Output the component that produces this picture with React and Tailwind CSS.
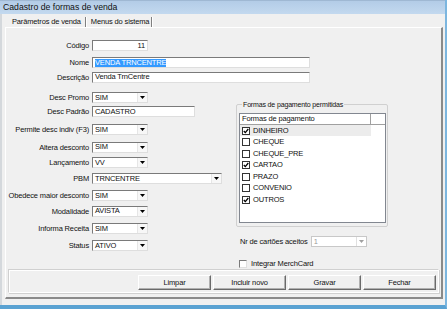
import React from "react"

const sunken = "bg-white border border-t-[#7a7a7a] border-l-[#7a7a7a] border-b-[#dedede] border-r-[#dedede]"

function Arrow({ disabled }) {
  return (
    <svg width="5" height="3" viewBox="0 0 5 3">
      <path d="M0 0h5L2.5 3z" fill={disabled ? "#a0a0a0" : "#000"} />
    </svg>
  )
}

function TextBox({ value, w, right, selected }) {
  return (
    <div className={`${sunken} h-[11px] flex items-center px-[2px] leading-none ${right ? "justify-end" : ""}`} style={{ width: w }}>
      {selected ? <span className="bg-[#3399ff] text-white">{value}</span> : value}
    </div>
  )
}

function Select({ value, w = 56, disabled }) {
  return (
    <div
      className={`h-[11px] flex items-center leading-none bg-white border ${
        disabled
          ? "border-[#c8c8c8] text-[#9a9a9a]"
          : "border-t-[#7a7a7a] border-l-[#7a7a7a] border-b-[#dedede] border-r-[#dedede]"
      }`}
      style={{ width: w }}
    >
      <span className="flex-1 pl-[2px]">{value}</span>
      <span
        className={`w-[10px] h-full flex items-center justify-center border-l ${
          disabled ? "border-[#e0e0e0]" : "border-[#e6e6e6] bg-[#f7f7f7]"
        }`}
      >
        <Arrow disabled={disabled} />
      </span>
    </div>
  )
}

function Row({ label, mt, children }) {
  return (
    <div className="flex items-center" style={{ marginTop: mt }}>
      <div className="w-[83px] text-right whitespace-nowrap">{label}</div>
      <div className="ml-[3px]">{children}</div>
    </div>
  )
}

function Check({ checked, dark = true }) {
  return (
    <span
      className={`w-[8px] h-[8px] flex items-center justify-center bg-white border ${
        dark ? "border-[#333]" : "border-t-[#7a7a7a] border-l-[#7a7a7a] border-b-[#e0e0e0] border-r-[#e0e0e0]"
      }`}
    >
      {checked && (
        <svg width="6" height="6" viewBox="0 0 6 6">
          <path d="M0.8 3l1.5 1.6L5.3 1" stroke="#000" strokeWidth="1.3" fill="none" />
        </svg>
      )}
    </span>
  )
}

const formas = [
  ["DINHEIRO", true],
  ["CHEQUE", false],
  ["CHEQUE_PRE", false],
  ["CARTAO", true],
  ["PRAZO", false],
  ["CONVENIO", false],
  ["OUTROS", true],
]

function Button({ children }) {
  return (
    <div className="w-[73px] h-[15px] flex items-center justify-center bg-[#f0f0f0] border border-t-white border-l-white border-b-[#6a6a6a] border-r-[#6a6a6a] shadow-[inset_-1px_-1px_0_#b0b0b0]">
      {children}
    </div>
  )
}

export default function App() {
  return (
    <div className="w-[447px] h-[309px] bg-[#f0f0f0] flex flex-col overflow-hidden font-['Liberation_Sans',Arial,sans-serif] text-[7.5px] tracking-[-0.15px] text-[#111] border-r-2 border-r-[#7cb6df] border-b-4 border-b-[#5aa2d2]">
      {/* Title bar */}
      <div className="h-[14px] shrink-0 flex items-center pl-[3px] bg-gradient-to-b from-[#b3cce7] to-[#c3d9ef] border-t border-[#9fb8d3] text-[8.7px] tracking-normal leading-none">
        Cadastro de formas de venda
      </div>

      <div className="flex-1 flex flex-col border-l-2 border-[#d4d8dc]">
        {/* Tabs */}
        <div className="h-[13px] shrink-0 flex items-end pl-[6px]">
          <div className="h-[10px] flex items-center pl-[4px] pr-[4px] border-r border-[#808080] shadow-[1px_0_0_#fff]">
            Parâmetros de venda
          </div>
          <div className="h-[10px] flex items-center pl-[5px] pr-[2px] border-r border-[#808080] shadow-[1px_0_0_#fff]">
            Menus do sistema
          </div>
        </div>

        {/* Tab panel */}
        <div className="ml-[3px] w-[438px] h-[272px] flex flex-col border-t border-l border-t-white border-l-white border-r-2 border-b-2 border-r-[#8a8a8a] border-b-[#8a8a8a]">
          <Row label="Código" mt={12}>
            <TextBox value="11" w={56} right />
          </Row>
          <Row label="Nome" mt={6}>
            <TextBox value="VENDA TRNCENTRE" w={218} selected />
          </Row>
          <Row label="Descrição" mt={3}>
            <TextBox value="Venda TrnCentre" w={218} />
          </Row>

          <div className="flex mt-[9px]">
            <div className="w-[230px]">
              <Row label="Desc Promo" mt={0}>
                <Select value="SIM" />
              </Row>
              <Row label="Desc Padrão" mt={3}>
                <TextBox value="CADASTRO" w={103} />
              </Row>
              <Row label="Permite desc indiv (F3)" mt={7}>
                <Select value="SIM" />
              </Row>
              <Row label="Altera desconto" mt={6}>
                <Select value="SIM" />
              </Row>
              <Row label="Lançamento" mt={4}>
                <Select value="VV" />
              </Row>
              <Row label="PBM" mt={5}>
                <Select value="TRNCENTRE" w={130} />
              </Row>
              <Row label="Obedece maior desconto" mt={6}>
                <Select value="SIM" />
              </Row>
              <Row label="Modalidade" mt={4}>
                <Select value="AVISTA" />
              </Row>
              <Row label="Informa Receita" mt={6}>
                <Select value="SIM" />
              </Row>
              <Row label="Status" mt={6}>
                <Select value="ATIVO" />
              </Row>
            </div>

            <div className="mt-[8px] w-[152px]">
              <fieldset className="border border-[#d0d0d0] rounded-[2px] pl-[2px] pr-[1px] pb-[3px]">
                <legend className="ml-[3px] px-[1px] leading-[9px] text-[7px]">Formas de pagamento permitidas</legend>
                <div className="mt-[4px] h-[110px] bg-white border border-[#828790]">
                  <div className="flex h-[11px] border-b border-[#a0a0a0]">
                    <div className="w-[131px] border-r border-[#a0a0a0] pl-[2px] flex items-center">Formas de pagamento</div>
                  </div>
                  {formas.map(([name, checked], i) => (
                    <div key={name} className={`h-[11.5px] w-[131px] flex items-center pl-[2px] ${i === 0 ? "bg-[#ececec]" : ""}`}>
                      <Check checked={checked} />
                      <span className="ml-[3px]">{name}</span>
                    </div>
                  ))}
                </div>
              </fieldset>

              <div className="flex items-center mt-[9px] pl-[4px]">
                <span className="whitespace-nowrap">Nr de cartões aceitos</span>
                <div className="ml-[3px]">
                  <Select value="1" disabled />
                </div>
              </div>

              <div className="flex items-center mt-[11px] pl-[3px]">
                <Check dark={false} />
                <span className="ml-[4px]">Integrar MerchCard</span>
              </div>
            </div>
          </div>

          {/* Buttons */}
          <div className="mt-auto mb-[4px] mx-[2px] h-[25px] flex justify-end items-start pt-[5px] pr-[2px] gap-[2px] border border-t-[#d0d0d0] border-l-[#d0d0d0] border-b-white border-r-white shadow-[inset_1px_1px_0_#fff,1px_1px_0_#d0d0d0]">
            <Button>Limpar</Button>
            <Button>Incluir novo</Button>
            <Button>Gravar</Button>
            <Button>Fechar</Button>
          </div>
        </div>
      </div>
    </div>
  )
}
